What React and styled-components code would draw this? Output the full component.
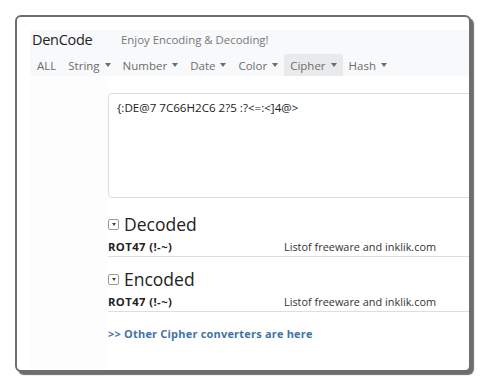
import React from "react";
import styled, { createGlobalStyle } from "styled-components";

const Global = createGlobalStyle`
  html, body { margin: 0; padding: 0; background: #fff; }
  body { font-family: "Open Sans", "Noto Sans", sans-serif; }
  * { box-sizing: border-box; }
`;

const Page = styled.div`
  width: 500px;
  height: 387px;
  padding: 15px 0 0 15px;
  background: #fff;
`;

const Card = styled.div`
  width: 456px;
  height: 357px;
  border: 2px solid #6e6e6e;
  border-radius: 6px;
  box-shadow: 3px 3px 1px rgba(60, 60, 60, 0.75);
  padding: 13px 0 0 13px;
  overflow: hidden;
  background: #fff;
`;

const Navbar = styled.div`
  background: #f8f9fa;
  height: 46px;
  display: flex;
  flex-direction: column;
`;

const BrandRow = styled.div`
  display: flex;
  align-items: center;
  height: 18px;
`;

const Brand = styled.div`
  font-size: 14.5px;
  color: #222;
  padding-left: 2px;
  width: 91px;
  letter-spacing: -0.3px;
`;

const Tagline = styled.div`
  font-size: 11.4px;
  color: #777;
`;

const NavRow = styled.div`
  display: flex;
  align-items: center;
  height: 22px;
  margin-top: 6px;
  padding-left: 1px;
`;

const NavItem = styled.div`
  display: flex;
  align-items: center;
  height: 22px;
  padding: 0 6px;
  font-size: 11.5px;
  color: #6c6c6c;
  background: ${(p) => (p.$active ? "#e9eaeb" : "transparent")};
`;

const Caret = styled.span`
  display: inline-block;
  width: 0;
  height: 0;
  margin-left: 5px;
  border-top: 4px solid #6c6c6c;
  border-left: 3px solid transparent;
  border-right: 3px solid transparent;
`;

const Main = styled.div`
  display: flex;
  height: 300px;
`;

const Sidebar = styled.div`
  width: 78px;
  flex: none;
  background: #fdfdfd;
`;

const Content = styled.div`
  flex: 1;
  padding-top: 17px;
  overflow: hidden;
`;

const Input = styled.div`
  width: 380px;
  height: 105px;
  border: 1px solid #dcdcdc;
  border-radius: 4px;
  padding: 6px 8px;
  font-size: 11.6px;
  color: #222;
`;

const Section = styled.div`
  margin-top: ${(p) => p.$mt}px;
`;

const Heading = styled.div`
  display: flex;
  align-items: center;
  height: 24px;
  font-size: 17.5px;
  color: #222;
`;

const Toggle = styled.span`
  width: 11px;
  height: 11px;
  border: 1px solid #9a9a9a;
  border-radius: 2px;
  margin-right: 5px;
  display: flex;
  align-items: center;
  justify-content: center;
  &::after {
    content: "";
    border-top: 3px solid #444;
    border-left: 2.5px solid transparent;
    border-right: 2.5px solid transparent;
  }
`;

const Row = styled.div`
  display: flex;
  align-items: center;
  height: 21px;
  border-bottom: 1px solid #dedede;
  width: 380px;
`;

const Label = styled.div`
  width: 176px;
  font-size: 11.3px;
  font-weight: 700;
  letter-spacing: 0.4px;
  color: #222;
`;

const Value = styled.div`
  font-size: 10.9px;
  color: #333;
`;

const Link = styled.div`
  margin-top: 14px;
  font-size: 11px;
  font-weight: 700;
  letter-spacing: 0.2px;
  color: #3f73a8;
`;

const navs = [
  { t: "ALL" },
  { t: "String", c: true },
  { t: "Number", c: true },
  { t: "Date", c: true },
  { t: "Color", c: true },
  { t: "Cipher", c: true, a: true },
  { t: "Hash", c: true },
];

const Result = ({ title, mt }) => (
  <Section $mt={mt}>
    <Heading>
      <Toggle />
      {title}
    </Heading>
    <Row>
      <Label>ROT47 (!-~)</Label>
      <Value>Listof freeware and inklik.com</Value>
    </Row>
  </Section>
);

export default function App() {
  return (
    <Page>
      <Global />
      <Card>
        <Navbar>
          <BrandRow>
            <Brand>DenCode</Brand>
            <Tagline>Enjoy Encoding &amp; Decoding!</Tagline>
          </BrandRow>
          <NavRow>
            {navs.map((n) => (
              <NavItem key={n.t} $active={n.a}>
                {n.t}
                {n.c && <Caret />}
              </NavItem>
            ))}
          </NavRow>
        </Navbar>
        <Main>
          <Sidebar />
          <Content>
            <Input>{"{:DE@7 7C66H2C6 2?5 :?<=:<]4@>"}</Input>
            <Result title="Decoded" mt={14} />
            <Result title="Encoded" mt={10} />
            <Link>&gt;&gt; Other Cipher converters are here</Link>
          </Content>
        </Main>
      </Card>
    </Page>
  );
}
